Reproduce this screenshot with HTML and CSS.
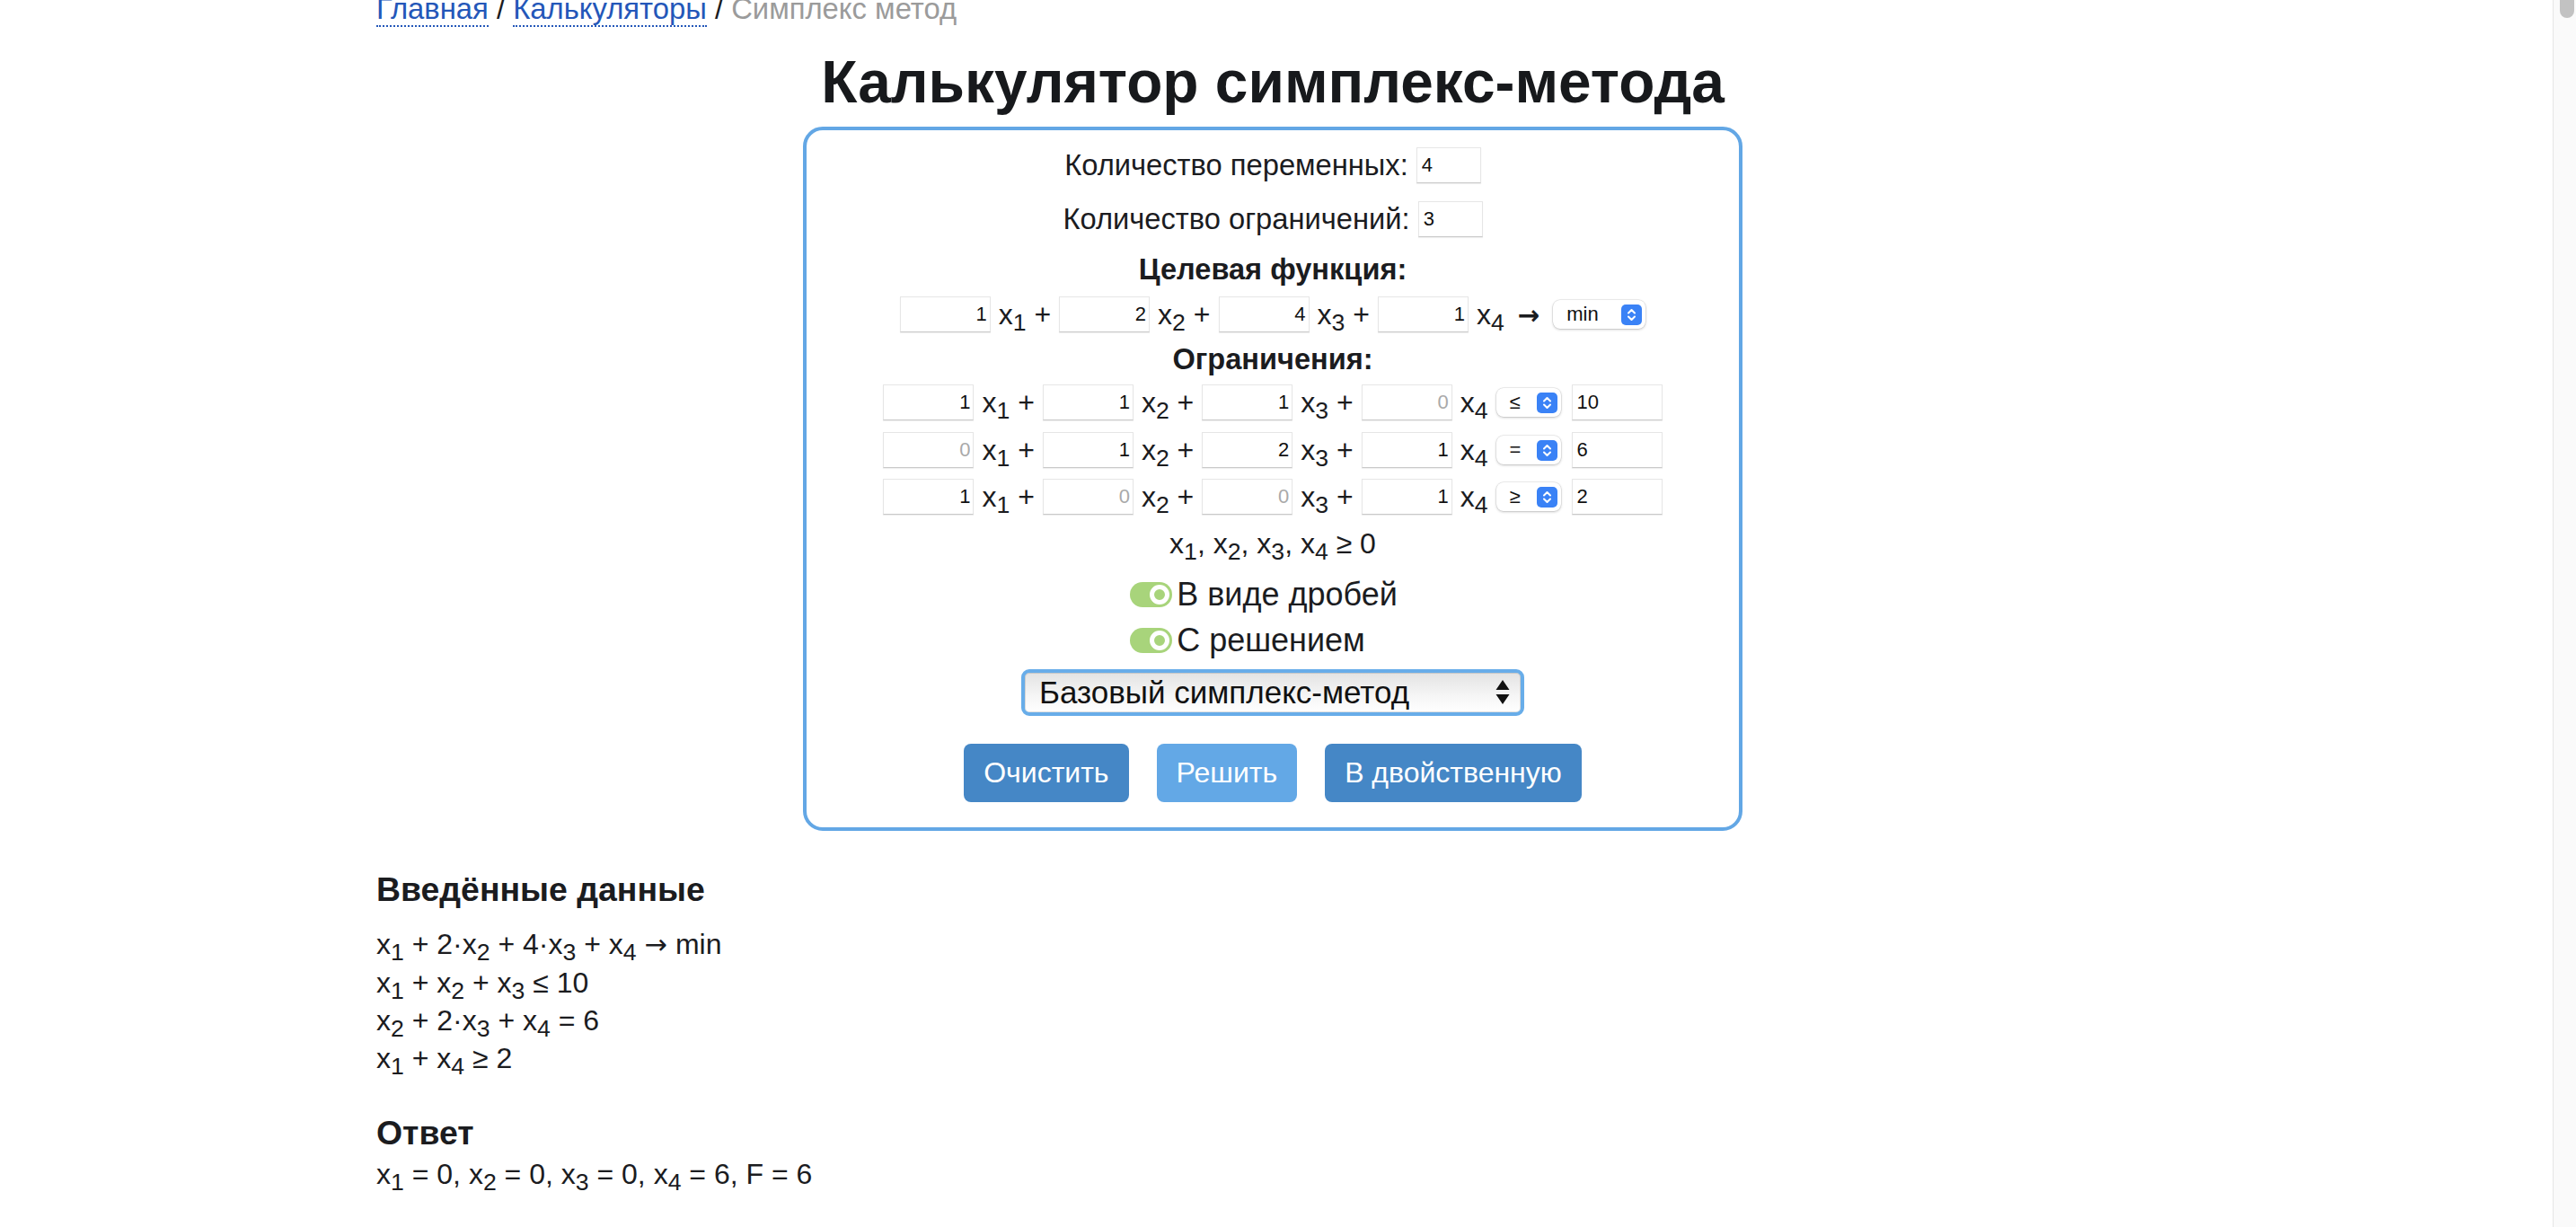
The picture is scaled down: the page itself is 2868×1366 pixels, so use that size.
FILE: index.html
```html
<!DOCTYPE html>
<html lang="ru">
<head>
<meta charset="utf-8">
<title>Калькулятор симплекс-метода</title>
<link rel="stylesheet" href="styles.css">
</head>
<body>
<div class="scrollbar"><div class="scrollbar-thumb"></div></div>
<div class="page">
  <nav class="crumbs"><a href="#">Главная</a> <span class="sep">/</span> <a href="#">Калькуляторы</a> <span class="sep">/</span> <span class="crumb-current">Симплекс метод</span></nav>
  <h1 class="title">Калькулятор симплекс-метода</h1>

  <form class="calc">
    <div class="row row-count">
      <label class="count-label">Количество переменных:</label>
      <input class="count-input" type="text" value="4">
    </div>
    <div class="row row-count row-count2">
      <label class="count-label">Количество ограничений:</label>
      <input class="count-input" type="text" value="3">
    </div>

    <div class="section-title">Целевая функция:</div>
    <div class="row row-obj">
      <input class="coef" type="text" value="1"><span class="term">x<sub>1</sub> +</span>
      <input class="coef" type="text" value="2"><span class="term">x<sub>2</sub> +</span>
      <input class="coef" type="text" value="4"><span class="term">x<sub>3</sub> +</span>
      <input class="coef" type="text" value="1"><span class="term">x<sub>4</sub> <span class="arrow arrow-row">→</span></span>
      <span class="sel sel-obj"><span class="sel-text">min</span><svg class="stepper" width="23" height="23" viewBox="0 0 23 23"><rect width="23" height="23" rx="5" fill="#3a82f6"/><path d="M8 9.5 L11.5 6 L15 9.5 M8 13.5 L11.5 17 L15 13.5" fill="none" stroke="#fff" stroke-width="2" stroke-linecap="round" stroke-linejoin="round"/></svg></span>
    </div>

    <div class="section-title section-title2">Ограничения:</div>
    <div class="row row-c">
      <input class="coef" type="text" value="1"><span class="term">x<sub>1</sub> +</span>
      <input class="coef" type="text" value="1"><span class="term">x<sub>2</sub> +</span>
      <input class="coef" type="text" value="1"><span class="term">x<sub>3</sub> +</span>
      <input class="coef" type="text" placeholder="0"><span class="term">x<sub>4</sub></span>
      <span class="sel sel-c"><span class="sel-text">≤</span><svg class="stepper" width="23" height="23" viewBox="0 0 23 23"><rect width="23" height="23" rx="5" fill="#3a82f6"/><path d="M8 9.5 L11.5 6 L15 9.5 M8 13.5 L11.5 17 L15 13.5" fill="none" stroke="#fff" stroke-width="2" stroke-linecap="round" stroke-linejoin="round"/></svg></span>
      <input class="rhs" type="text" value="10">
    </div>
    <div class="row row-c row-c2">
      <input class="coef" type="text" placeholder="0"><span class="term">x<sub>1</sub> +</span>
      <input class="coef" type="text" value="1"><span class="term">x<sub>2</sub> +</span>
      <input class="coef" type="text" value="2"><span class="term">x<sub>3</sub> +</span>
      <input class="coef" type="text" value="1"><span class="term">x<sub>4</sub></span>
      <span class="sel sel-c"><span class="sel-text">=</span><svg class="stepper" width="23" height="23" viewBox="0 0 23 23"><rect width="23" height="23" rx="5" fill="#3a82f6"/><path d="M8 9.5 L11.5 6 L15 9.5 M8 13.5 L11.5 17 L15 13.5" fill="none" stroke="#fff" stroke-width="2" stroke-linecap="round" stroke-linejoin="round"/></svg></span>
      <input class="rhs" type="text" value="6">
    </div>
    <div class="row row-c row-c3">
      <input class="coef" type="text" value="1"><span class="term">x<sub>1</sub> +</span>
      <input class="coef" type="text" placeholder="0"><span class="term">x<sub>2</sub> +</span>
      <input class="coef" type="text" placeholder="0"><span class="term">x<sub>3</sub> +</span>
      <input class="coef" type="text" value="1"><span class="term">x<sub>4</sub></span>
      <span class="sel sel-c"><span class="sel-text">≥</span><svg class="stepper" width="23" height="23" viewBox="0 0 23 23"><rect width="23" height="23" rx="5" fill="#3a82f6"/><path d="M8 9.5 L11.5 6 L15 9.5 M8 13.5 L11.5 17 L15 13.5" fill="none" stroke="#fff" stroke-width="2" stroke-linecap="round" stroke-linejoin="round"/></svg></span>
      <input class="rhs" type="text" value="2">
    </div>

    <div class="nonneg">x<sub>1</sub>, x<sub>2</sub>, x<sub>3</sub>, x<sub>4</sub> ≥ 0</div>

    <div class="toggles">
      <label class="toggle-row"><span class="switch"><span class="knob"></span></span>В виде дробей</label>
      <label class="toggle-row"><span class="switch"><span class="knob"></span></span>С решением</label>
    </div>

    <div class="method-select">
      <span class="method-text">Базовый симплекс-метод</span>
      <svg class="method-arrows" width="16" height="28" viewBox="0 0 16 28"><path d="M8 0 L15.5 11 L0.5 11 Z M0.5 16 L15.5 16 L8 27 Z" fill="#111"/></svg>
    </div>

    <div class="buttons">
      <button type="button" class="btn">Очистить</button>
      <button type="button" class="btn btn-light">Решить</button>
      <button type="button" class="btn">В двойственную</button>
    </div>
  </form>

  <h3 class="sub-title">Введённые данные</h3>
  <div class="eqs">
    <div class="eq-line">x<sub>1</sub> + 2·x<sub>2</sub> + 4·x<sub>3</sub> + x<sub>4</sub> <span class="arrow">→</span> min</div>
    <div class="eq-line">x<sub>1</sub> + x<sub>2</sub> + x<sub>3</sub> ≤ 10</div>
    <div class="eq-line">x<sub>2</sub> + 2·x<sub>3</sub> + x<sub>4</sub> = 6</div>
    <div class="eq-line">x<sub>1</sub> + x<sub>4</sub> ≥ 2</div>
  </div>

  <h3 class="sub-title sub-title2">Ответ</h3>
  <div class="eq-line answer">x<sub>1</sub> = 0, x<sub>2</sub> = 0, x<sub>3</sub> = 0, x<sub>4</sub> = 6, F = 6</div>
</div>
</body>
</html>
```

FILE: styles.css
```css
* { box-sizing: border-box; }

html, body {
  margin: 0;
  padding: 0;
  overflow: hidden;
  background: #ffffff;
}

body {
  font-family: "Liberation Sans", Arial, Helvetica, sans-serif;
  font-size: 32px;
  color: #1b1c1f;
  padding-right: 34px;
  height: 1366px;
}

sub { line-height: 0; }

.arrow { font-family: "DejaVu Sans", sans-serif; font-size: 0.95em; }

.arrow-row {
  font-weight: 700;
  font-size: 0.92em;
  margin: 0 6px;
}

.scrollbar {
  position: fixed;
  top: 0;
  right: 0;
  width: 26px;
  height: 100%;
  background: #fafafa;
  border-left: 1px solid #e6e6e6;
}

.scrollbar-thumb {
  margin: -20px 0 0 7px;
  width: 16px;
  height: 40px;
  border-radius: 8px;
  background: #c2c2c2;
}

.page {
  width: 1996px;
  margin: 0 auto;
  display: flow-root;
}

/* breadcrumbs */
.crumbs {
  margin-top: -9px;
  height: 37px;
  line-height: 37px;
  font-size: 32.8px;
  white-space: nowrap;
}

.crumbs a {
  color: #2457b9;
  text-decoration: none;
  border-bottom: 2px dotted #2457b9;
}

.crumbs .sep { color: #1b1c1f; }

.crumb-current { color: #9b9b9b; }

.title {
  font-size: 65.8px;
  font-weight: 700;
  line-height: 74px;
  margin: 26px 0 13px;
  text-align: center;
  color: #17191c;
}

/* calculator box */
.calc {
  width: 1046px;
  margin: 0 auto;
  border: 4px solid #63a7e5;
  border-radius: 22px;
  padding: 19px 0 28px;
}

.row {
  display: flex;
  justify-content: center;
  align-items: center;
  height: 40px;
  white-space: nowrap;
}

.row-count2 { margin-top: 20px; }

.count-label { margin-right: 9px; font-size: 32.7px; }

input {
  font-family: "Liberation Sans", Arial, Helvetica, sans-serif;
  font-size: 22px;
  color: #111;
  height: 40px;
  margin: 0;
  background: #fff;
  border: 1px solid #e6e6e6;
  border-bottom-color: #c9c9c9;
  border-radius: 0;
  outline: none;
  box-shadow: 0 1px 1px rgba(0, 0, 0, 0.06);
}

input::placeholder { color: #a9a9a9; }

.count-input {
  width: 72px;
  padding: 0 5px;
}

.coef {
  width: 101px;
  padding: 0 3px;
  text-align: right;
}

.rhs {
  width: 101px;
  padding: 0 5px;
  margin-left: 12px;
}

.term {
  margin: 0 9px;
  white-space: pre;
}

.section-title {
  margin-top: 18px;
  line-height: 36px;
  font-size: 32.6px;
  font-weight: 700;
  text-align: center;
}

.section-title2 { margin-top: 12px; }

.row-obj { margin-top: 12px; }

.row-c { margin-top: 10px; }
.row-c2 { margin-top: 13px; }
.row-c3 { margin-top: 12px; }

/* macOS-like small selects */
.sel {
  display: inline-flex;
  align-items: center;
  height: 32px;
  border-radius: 8px;
  background: #fff;
  box-shadow: 0 0 0 0.5px rgba(0, 0, 0, 0.12), 0 1px 3px rgba(0, 0, 0, 0.22);
  font-size: 22px;
  color: #111;
  padding: 0 4px 0 15px;
}

.sel-text { flex: 1; }

.sel-obj { width: 103px; }
.sel-c { width: 72px; }

.stepper { display: block; flex: none; }

.nonneg {
  margin-top: 14px;
  line-height: 36px;
  text-align: center;
}

/* toggles */
.toggles {
  margin: 17px auto 0;
  width: max-content;
  padding-right: 20px;
  display: flex;
  flex-direction: column;
  align-items: flex-start;
  gap: 7px;
}

.toggle-row {
  display: flex;
  align-items: center;
  height: 44px;
  font-size: 36px;
}

.switch {
  display: flex;
  align-items: center;
  justify-content: flex-end;
  width: 47px;
  height: 28px;
  border-radius: 14px;
  background: #a8d47b;
  padding-right: 3px;
  margin-right: 5px;
}

.knob {
  width: 22px;
  height: 22px;
  border-radius: 50%;
  border: 5px solid #ffffff;
}

/* method select */
.method-select {
  margin: 10px auto 0;
  width: 560px;
  height: 52px;
  border: 4px solid #68ade9;
  border-radius: 9px;
  background: linear-gradient(#e3e3e3, #f6f6f6 60%, #ffffff);
  box-shadow: inset 0 0 0 1px rgba(0, 0, 0, 0.12);
  display: flex;
  align-items: center;
  padding: 0 12px 0 16px;
  color: #111;
}

.method-text { flex: 1; font-size: 35px; }

.method-arrows { display: block; flex: none; }

/* buttons */
.buttons {
  margin-top: 31px;
  display: flex;
  justify-content: center;
  gap: 31px;
}

.btn {
  height: 65px;
  padding: 0 22px;
  border: none;
  border-radius: 8px;
  background: #4587c6;
  color: #ffffff;
  font-family: "Liberation Sans", Arial, Helvetica, sans-serif;
  font-size: 32px;
}

.btn-light { background: #63a8e6; }

/* results */
.sub-title {
  font-size: 37.44px;
  font-weight: 700;
  line-height: 43px;
  margin: 44px 0 0;
}

.sub-title2 { margin-top: 41px; }

.eqs { margin-top: 18px; }

.eq-line {
  line-height: 42px;
  white-space: nowrap;
}

.answer { margin-top: 3px; }
```
